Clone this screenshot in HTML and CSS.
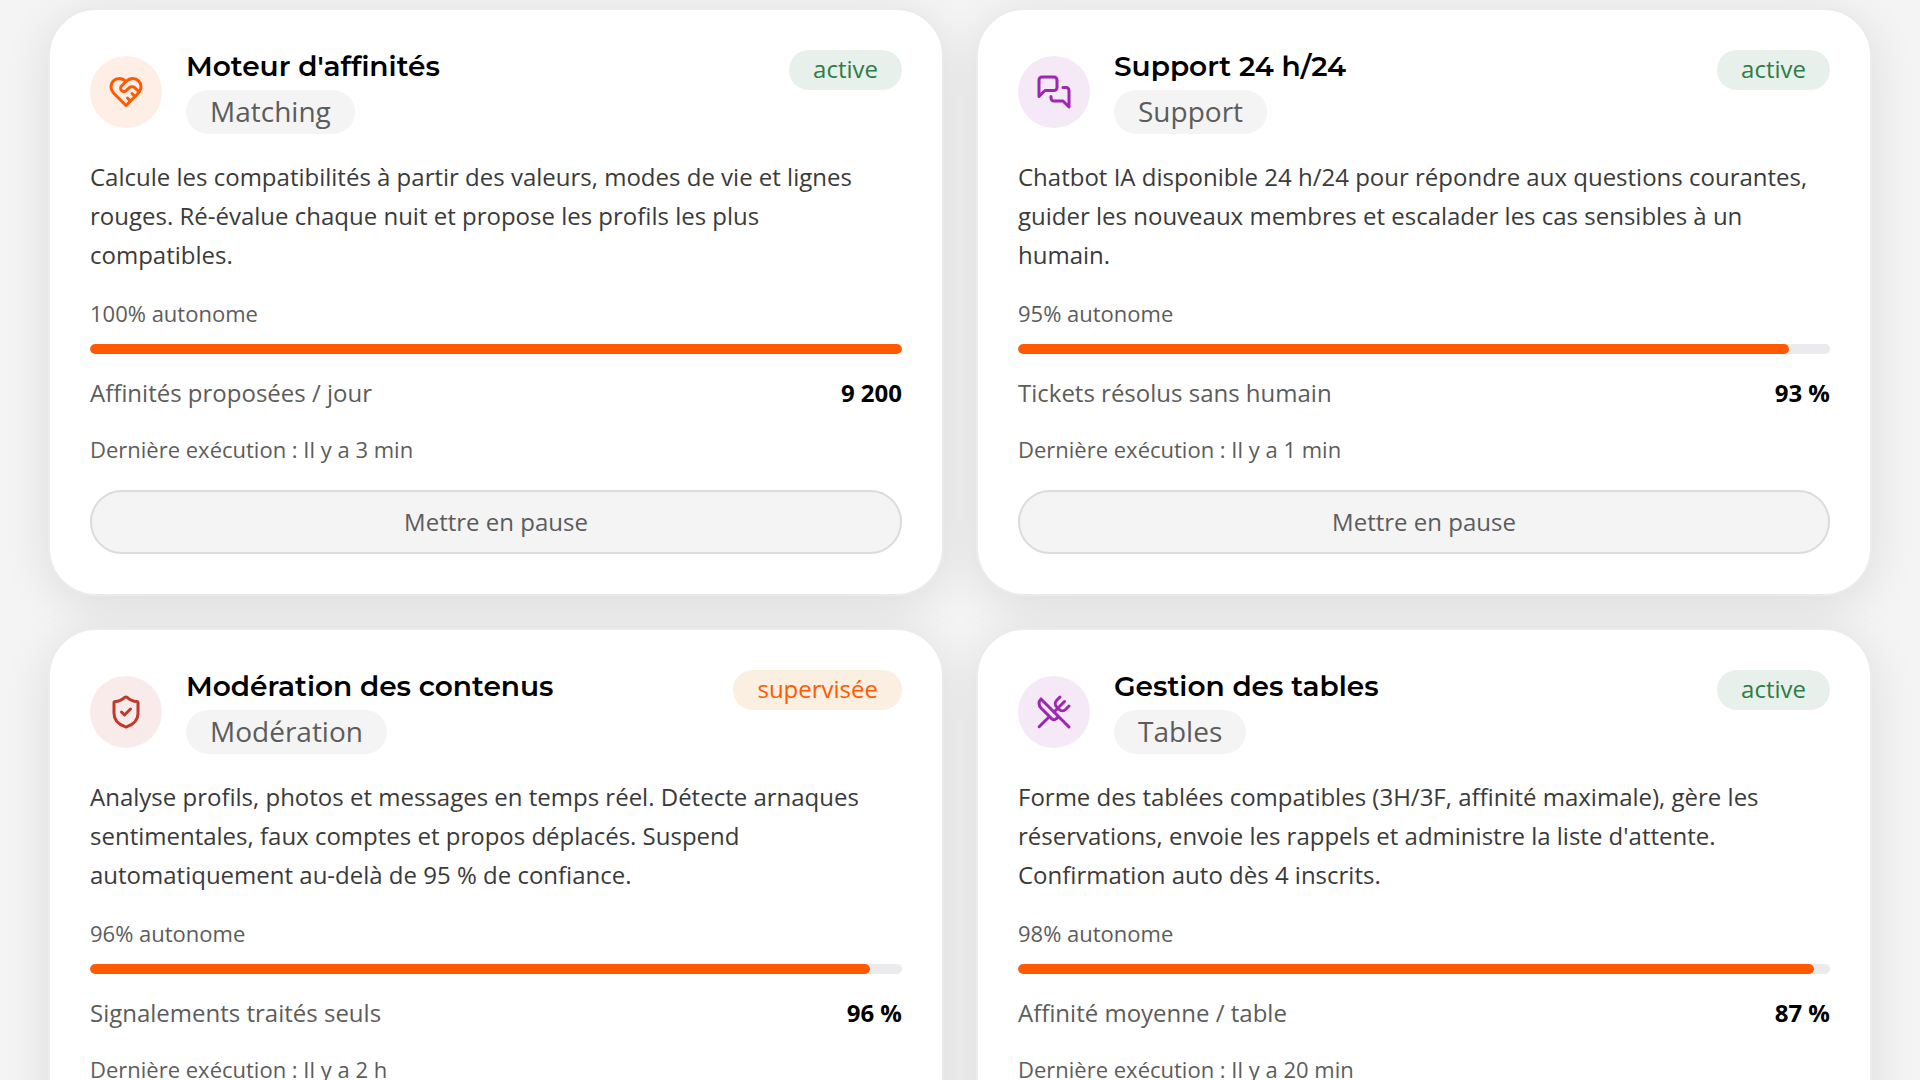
FILE: index.html
```html
<!DOCTYPE html>
<html lang="fr">
<head>
    <meta charset="UTF-8">
    <meta name="viewport" content="width=device-width, initial-scale=1.0">
    <title>Agents IA</title>
    <link rel="stylesheet" href="styles.css">
</head>
<body>

    <main class="agents">

        <article class="card">
            <header class="card-header">
                <div class="card-icon orange">
                    <svg viewBox="0 0 24 24" aria-hidden="true">
                        <path d="M19 14c1.49-1.46 3-3.21 3-5.5A5.5 5.5 0 0 0 16.5 3c-1.76 0-3 .5-4.5 2-1.5-1.5-2.74-2-4.5-2A5.5 5.5 0 0 0 2 8.5c0 2.3 1.5 4.05 3 5.5l7 7Z"/>
                        <path d="M12 5 9.04 7.96a2.17 2.17 0 0 0 0 3.08c.82.82 2.13.85 3 .07l2.07-1.9a2.82 2.82 0 0 1 3.79 0l2.96 2.66"/>
                        <path d="m18 15-2-2"/>
                        <path d="m15 18-2-2"/>
                    </svg>
                </div>
                <div class="card-title">
                    <h2>Moteur d'affinités</h2>
                    <span class="tag">Matching</span>
                </div>
                <span class="status active">active</span>
            </header>
            <p class="description">Calcule les compatibilités à partir des valeurs, modes de vie et lignes rouges. Ré-évalue chaque nuit et propose les profils les plus compatibles.</p>
            <div class="autonomy">
                <span>100% autonome</span>
                <div class="bar"><div class="bar-fill" style="width: 100%"></div></div>
            </div>
            <div class="metric">
                <span>Affinités proposées / jour</span>
                <strong>9 200</strong>
            </div>
            <p class="last-run">Dernière exécution : Il y a 3 min</p>
            <button type="button" class="pause-button">Mettre en pause</button>
        </article>

        <article class="card">
            <header class="card-header">
                <div class="card-icon purple">
                    <svg viewBox="0 0 24 24" aria-hidden="true">
                        <path d="M14 9a2 2 0 0 1-2 2H6l-4 4V4c0-1.1.9-2 2-2h8a2 2 0 0 1 2 2v5Z"/>
                        <path d="M18 9h2a2 2 0 0 1 2 2v11l-4-4h-6a2 2 0 0 1-2-2v-1"/>
                    </svg>
                </div>
                <div class="card-title">
                    <h2>Support 24 h/24</h2>
                    <span class="tag">Support</span>
                </div>
                <span class="status active">active</span>
            </header>
            <p class="description">Chatbot IA disponible 24 h/24 pour répondre aux questions courantes, guider les nouveaux membres et escalader les cas sensibles à un humain.</p>
            <div class="autonomy">
                <span>95% autonome</span>
                <div class="bar"><div class="bar-fill" style="width: 95%"></div></div>
            </div>
            <div class="metric">
                <span>Tickets résolus sans humain</span>
                <strong>93 %</strong>
            </div>
            <p class="last-run">Dernière exécution : Il y a 1 min</p>
            <button type="button" class="pause-button">Mettre en pause</button>
        </article>

        <article class="card">
            <header class="card-header">
                <div class="card-icon red">
                    <svg viewBox="0 0 24 24" aria-hidden="true">
                        <path d="M20 13c0 5-3.5 7.5-7.66 8.95a1 1 0 0 1-.67-.01C7.5 20.5 4 18 4 13V6a1 1 0 0 1 1-1c2 0 4.5-1.2 6.24-2.72a1.17 1.17 0 0 1 1.52 0C14.51 3.81 17 5 19 5a1 1 0 0 1 1 1z"/>
                        <path d="m9 12 2 2 4-4"/>
                    </svg>
                </div>
                <div class="card-title">
                    <h2>Modération des contenus</h2>
                    <span class="tag">Modération</span>
                </div>
                <span class="status supervised">supervisée</span>
            </header>
            <p class="description">Analyse profils, photos et messages en temps réel. Détecte arnaques sentimentales, faux comptes et propos déplacés. Suspend automatiquement au-delà de 95 % de confiance.</p>
            <div class="autonomy">
                <span>96% autonome</span>
                <div class="bar"><div class="bar-fill" style="width: 96%"></div></div>
            </div>
            <div class="metric">
                <span>Signalements traités seuls</span>
                <strong>96 %</strong>
            </div>
            <p class="last-run">Dernière exécution : Il y a 2 h</p>
            <button type="button" class="pause-button">Mettre en pause</button>
        </article>

        <article class="card">
            <header class="card-header">
                <div class="card-icon purple">
                    <svg viewBox="0 0 24 24" aria-hidden="true">
                        <path d="m16 2-2.3 2.3a3 3 0 0 0 0 4.2l1.8 1.8a3 3 0 0 0 4.2 0L22 8"/>
                        <path d="M15 15 3.3 3.3a4.2 4.2 0 0 0 0 6l7.3 7.3c.7.7 2 .7 2.8 0L15 15Zm0 0 7 7"/>
                        <path d="m2.1 21.8 6.4-6.3"/>
                        <path d="m19 5-7 7"/>
                    </svg>
                </div>
                <div class="card-title">
                    <h2>Gestion des tables</h2>
                    <span class="tag">Tables</span>
                </div>
                <span class="status active">active</span>
            </header>
            <p class="description">Forme des tablées compatibles (3H/3F, affinité maximale), gère les réservations, envoie les rappels et administre la liste d'attente. Confirmation auto dès 4 inscrits.</p>
            <div class="autonomy">
                <span>98% autonome</span>
                <div class="bar"><div class="bar-fill" style="width: 98%"></div></div>
            </div>
            <div class="metric">
                <span>Affinité moyenne / table</span>
                <strong>87 %</strong>
            </div>
            <p class="last-run">Dernière exécution : Il y a 20 min</p>
            <button type="button" class="pause-button">Mettre en pause</button>
        </article>

    </main>

</body>
</html>
```

FILE: styles.css
```css
* {
    box-sizing: border-box;
}

body {
    margin: 0;
    background-color: #f4f4f4;
    color: #5c5c5c;
    font-family: "Open Sans", "Noto Sans", sans-serif;
    font-size: 24px;
}

h2,
p {
    margin: 0;
}

.agents {
    display: grid;
    grid-template-columns: 1fr 1fr;
    gap: 32px;
    padding: 8px 48px 48px;
}

.card {
    display: flex;
    flex-direction: column;
    padding: 40px;
    background-color: #fff;
    border: 2px solid #ebebeb;
    border-radius: 48px;
    box-shadow: 0 8px 48px rgba(0, 0, 0, 0.1);
}

.card-header {
    display: flex;
    align-items: center;
    gap: 24px;
    margin-bottom: 23px;
}

.card-icon {
    display: flex;
    align-items: center;
    justify-content: center;
    flex-shrink: 0;
    width: 72px;
    height: 72px;
    border-radius: 50%;
}

.card-icon svg {
    width: 36px;
    height: 36px;
    fill: none;
    stroke: currentColor;
    stroke-width: 2;
    stroke-linecap: round;
    stroke-linejoin: round;
}

.orange {
    background-color: #ffeee6;
    color: #ff5a00;
}

.purple {
    background-color: #f5e9f7;
    color: #9c27b0;
}

.red {
    background-color: #f9ebea;
    color: #c0392b;
}

.card-title {
    display: flex;
    flex-direction: column;
    align-items: flex-start;
    gap: 8px;
    flex: 1;
}

.card-title h2 {
    color: #000;
    font-family: Montserrat, "Open Sans", sans-serif;
    font-size: 28px;
    font-weight: 600;
    line-height: 32px;
}

.tag {
    padding: 0 24px 2px;
    background-color: #f4f4f4;
    border-radius: 22px;
    font-size: 28px;
    line-height: 42px;
}

.status {
    align-self: flex-start;
    padding: 0 24px 2px;
    border-radius: 20px;
    line-height: 38px;
}

.active {
    background-color: #e8f0eb;
    color: #2e7d46;
}

.supervised {
    background-color: #faefe0;
    color: #ff5a00;
}

.description {
    margin-bottom: 24px;
    color: #3a3a3a;
    line-height: 39px;
}

.autonomy {
    display: flex;
    flex-direction: column;
    gap: 16px;
    margin-bottom: 20px;
    font-size: 22px;
    line-height: 30px;
}

.bar {
    height: 10px;
    background-color: #ebebed;
    border-radius: 5px;
    overflow: hidden;
}

.bar-fill {
    height: 100%;
    background-color: #ff5a00;
    border-radius: 5px;
}

.metric {
    display: flex;
    justify-content: space-between;
    margin-bottom: 20px;
    line-height: 38px;
}

.metric strong {
    color: #000;
}

.last-run {
    margin-bottom: 24px;
    font-size: 22px;
    line-height: 34px;
}

.pause-button {
    height: 64px;
    padding: 0 32px 2px;
    background-color: #f4f4f4;
    border: 2px solid #dcdcdc;
    border-radius: 32px;
    color: #5c5c5c;
    font-family: inherit;
    font-size: 24px;
    cursor: pointer;
}
```
